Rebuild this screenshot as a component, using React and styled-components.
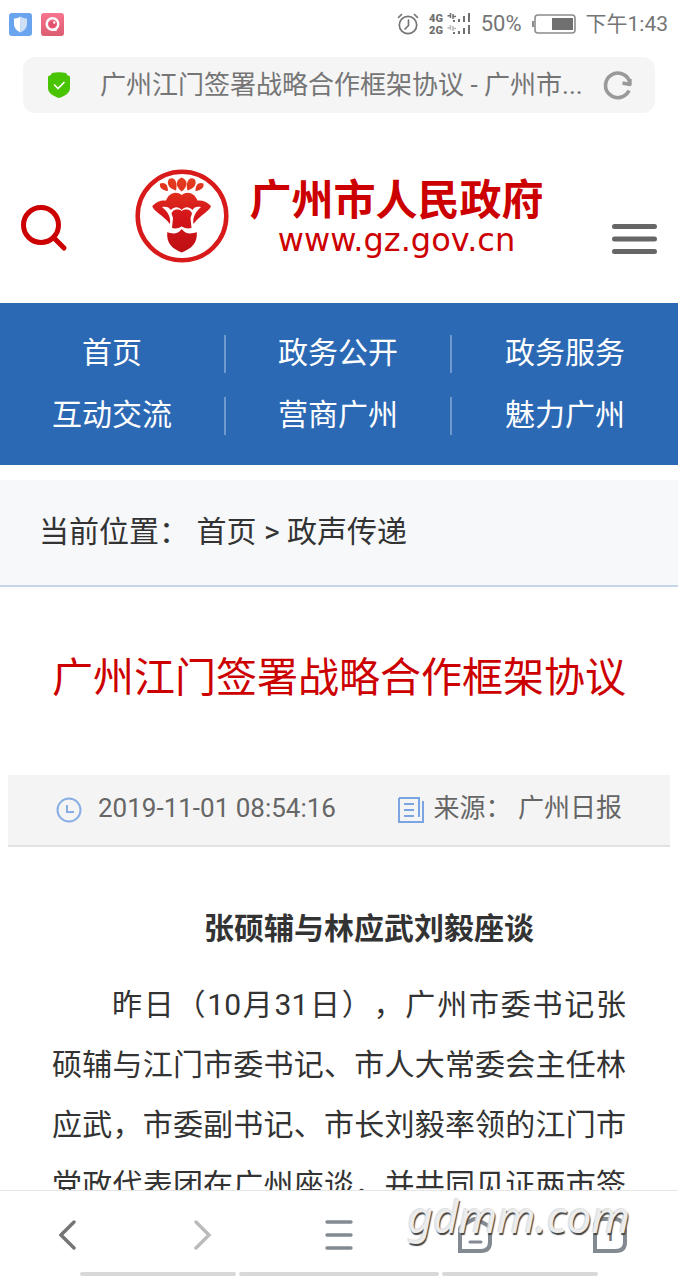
import React from 'react';
import styled, { createGlobalStyle } from 'styled-components';

const GlobalStyle = createGlobalStyle`
* {
    box-sizing: border-box;
}
body {
    margin: 0;
    background: #fff;
    color: #333;
    font-family: Roboto, "Noto Sans CJK SC", sans-serif;
    text-spacing-trim: space-all;
}
h1, h2, p {
    margin: 0;
    font-weight: 400;
}
a {
    color: inherit;
    text-decoration: none;
}
button {
    display: flex;
    padding: 0;
    border: 0;
    background: none;
    cursor: pointer;
}
svg {
    display: block;
    flex: none;
}
`;

const Screen = styled.div`
height: 100vh;
display: flex;
flex-direction: column;
overflow: hidden;
`;

const StatusBar = styled.div`
display: flex;
align-items: center;
justify-content: space-between;
flex: none;
height: 48px;
padding: 0 10px 0 9px;
color: #757575;
font-size: 22px;
line-height: 32px;
`;

const StatusGroup = styled.div`
display: flex;
align-items: center;
gap: ${({ $gap }) => $gap}px;
`;

const Time = styled.span`
font-size: 21px;
`;

const AddressBar = styled.div`
display: flex;
align-items: center;
flex: none;
height: 56px;
margin: 9px 23px 0;
padding: 0 22px 0 25px;
border-radius: 12px;
background: #f5f5f5;
`;

const AddressInput = styled.input`
flex: 1;
min-width: 0;
margin: 0 16px 0 30px;
padding: 0;
border: 0;
outline: 0;
background: transparent;
color: #757575;
font: 26px/38px Roboto, "Noto Sans CJK SC", sans-serif;
`;

const Page = styled.main`
flex: 1;
min-height: 0;
overflow: hidden;
`;

const Header = styled.header`
display: flex;
align-items: center;
justify-content: space-between;
height: 190px;
padding: 16px 20px 0;
`;

const HeaderButton = styled.button`
padding-top: ${({ $drop }) => $drop}px;
`;

const Logo = styled.a`
display: flex;
align-items: center;
gap: 20px;
color: #cc0000;
`;

const LogoText = styled.span`
display: flex;
flex-direction: column;
align-items: center;
padding-top: 6px;
`;

const LogoName = styled.span`
font-size: 42px;
line-height: 42px;
font-weight: 700;
`;

const LogoUrl = styled.span`
font-family: "DejaVu Sans", sans-serif;
font-size: 32px;
line-height: 36px;
`;

const Nav = styled.nav`
display: grid;
grid-template-columns: repeat(3, 1fr);
row-gap: 24px;
padding: 32px 0 30px;
background: #2b69b4;
`;

const NavLink = styled.a`
height: 38px;
border-right: ${({ $last }) => ($last ? '0' : '2px solid #6f99cd')};
color: #fff;
font-size: 30px;
line-height: 36px;
text-align: center;
`;

const Breadcrumb = styled.div`
margin-top: 15px;
padding: 30px 39px 31px;
border-bottom: 2px solid #c4d6e8;
background: #f7f8fa;
font-size: 30px;
line-height: 44px;
`;

const Title = styled.h1`
padding: 61px 20px 67px;
color: #cc0000;
font-size: 41px;
line-height: 60px;
text-align: center;
`;

const Meta = styled.div`
display: flex;
align-items: center;
height: 72px;
margin: 0 8px;
padding: 0 48px;
justify-content: space-between;
border-bottom: 2px solid #e2e2e2;
background: #f4f4f4;
color: #666;
font-size: 26px;
line-height: 36px;
`;

const MetaItem = styled.span`
display: flex;
align-items: center;
gap: ${({ $gap }) => $gap}px;
`;

const MetaText = styled.span`
padding-bottom: 4px;
`;

const Article = styled.article`
padding: 52px 52px 0;
font-size: 30px;
line-height: 60px;
text-indent: 2em;
`;

const Subheading = styled.h2`
margin-bottom: 16px;
font-size: 30px;
line-height: 60px;
font-weight: 700;
text-align: center;
`;

const Paragraph = styled.p`
text-align: justify;
text-align-last: justify;
`;

const Toolbar = styled.nav`
position: relative;
display: grid;
grid-template-columns: repeat(5, 1fr);
flex: none;
height: 90px;
border-top: 1px solid #e6e6e6;
background: #fff;
`;

const ToolButton = styled.button`
align-items: center;
justify-content: center;
padding-bottom: 2px;
`;

const Tracks = styled.div`
position: absolute;
left: 0;
right: 0;
bottom: 4px;
display: grid;
grid-template-columns: 157fr 200fr 157fr;
gap: 3px;
padding: 0 80px;
`;

const Track = styled.span`
height: 4px;
border-radius: 2px;
background: #d8d8d8;
`;

const Watermark = styled.span`
position: absolute;
right: 48px;
top: 0;
color: #ececec;
font: italic 44px/50px "Noto Sans", sans-serif;
text-shadow: 1px 2px 1px #444, -1px -1px 1px #ddd;
pointer-events: none;
`;

const navItems = ['首页', '政务公开', '政务服务', '互动交流', '营商广州', '魅力广州'];

const ShieldTile = () => (
    <svg width="23" height="23" viewBox="0 0 23 23">
        <rect width="23" height="23" rx="3" fill="#6ba4ee" />
        <path d="M11.500 3.500C9.500 5 7.500 5.500 5 5.500V11c0 4 3 7 6.500 8.500z" fill="#fff" />
        <path d="M11.500 3.500C13.500 5 15.500 5.500 18 5.500V11c0 4-3 7-6.500 8.500z" fill="#cfdff5" />
    </svg>
);

const CameraTile = () => (
    <svg width="23" height="23" viewBox="0 0 23 23">
        <defs>
            <linearGradient id="pink" x2="0" y2="1">
                <stop stopColor="#f9748f" />
                <stop offset="1" stopColor="#dc5c70" />
            </linearGradient>
        </defs>
        <rect width="23" height="23" rx="3" fill="url(#pink)" />
        <circle cx="11.500" cy="11" r="5.800" fill="none" stroke="#fff" strokeWidth="2.400" />
        <path d="M12 15.500h4l-.5 2.500h-4z" fill="#fff" />
        <circle cx="11.500" cy="11.500" r="3.300" fill="#e2506c" />
        <circle cx="13.200" cy="9.500" r="1.200" fill="#fff" />
    </svg>
);

const AlarmIcon = () => (
    <svg width="22" height="24" viewBox="0 0 22 24" fill="none" stroke="#757575" strokeWidth="1.700" strokeLinecap="round">
        <circle cx="11" cy="13" r="8.700" />
        <path d="M1.500 5.500 4.500 2.500M20.500 5.500 17.500 2.500M11.500 8v5.500L8 17" />
    </svg>
);

const SignalIcon = () => (
    <svg width="42" height="26" viewBox="0 0 42 26" fill="#707070">
        <text x="0" y="11" fontSize="11" fontWeight="900" fontFamily="Roboto">4G</text>
        <text x="0" y="23" fontSize="11" fontWeight="900" fontFamily="Roboto">2G</text>
        <path d="M21.500 2v5M24 3v5M18.500 5l3-.5M24 5.500h3" stroke="#707070" strokeWidth="1.500" />
        <path d="M21.500 14v5M24 15v5M18.500 17l3-.5M24 17.500h3" stroke="#bbb" strokeWidth="1.500" />
        <path d="M24 9h2v2h-2zM29 8h2v3h-2zM34 5h2v6h-2zM39 2h2v9h-2z" />
        <path d="M24 21h2v2h-2zM29 20h2v3h-2zM34 17h2v6h-2zM39 14h2v9h-2z" />
    </svg>
);

const BatteryIcon = () => (
    <svg width="44" height="20" viewBox="0 0 44 20">
        <rect x="3" y="1" width="40" height="18" rx="3" fill="none" stroke="#8c8c8c" strokeWidth="1.600" />
        <path d="M0 7h2v6H0z" fill="#8c8c8c" />
        <path d="M20 4h21v12H20z" fill="#707070" />
    </svg>
);

const SafeIcon = () => (
    <svg width="22" height="26" viewBox="0 0 22 26">
        <path d="M4 1Q11-.5 18 1 19 4 22 4.500V16c0 5-5 8-11 10C5 24 0 21 0 16V4.500Q3 4 4 1z" fill="#48c400" />
        <path d="m6 12.500 4 4 6.500-6.500" fill="none" stroke="#fff" strokeWidth="1.600" />
    </svg>
);

const ReloadIcon = () => (
    <svg width="30" height="30" viewBox="0 0 30 30" fill="none" stroke="#999" strokeWidth="3.600">
        <path d="M26 20.500A12.300 12.300 0 1 1 26.500 11.500" />
        <path d="M27 9v5.500L19.500 13" strokeWidth="3.400" strokeLinejoin="round" />
    </svg>
);

const SearchIcon = () => (
    <svg width="48" height="48" viewBox="0 0 48 48" fill="none" stroke="#cc0000" strokeWidth="5" strokeLinecap="round">
        <circle cx="21" cy="21" r="17.500" />
        <path d="m34 34 10 10" />
    </svg>
);

const MenuIcon = () => (
    <svg width="47" height="32" viewBox="0 0 47 32" stroke="#666" strokeWidth="5" strokeLinecap="round">
        <path d="M3.500 3.500h40M3.500 16h40M3.500 28.500h40" />
    </svg>
);

const Emblem = () => (
    <svg width="94" height="94" viewBox="0 0 94 94">
        <defs>
            <linearGradient id="red" gradientUnits="userSpaceOnUse" x1="0" y1="8" x2="0" y2="84">
                <stop stopColor="#e6401f" />
                <stop offset="0.5" stopColor="#d5161a" />
                <stop offset="1" stopColor="#bd1014" />
            </linearGradient>
        </defs>
        <circle cx="47" cy="47" r="44.300" fill="none" stroke="#d91a1a" strokeWidth="4.500" />
        <g fill="url(#red)">
            <path d="M46.700 8.500c-7 3-6 9.500 0 14 6-4.500 7-11 0-14z" />
            <path d="M34 10c6-3 9 4 7 11.500-7-2-10-7-7-11.500zM59.500 10c-6-3-9 4-7 11.500 7-2 10-7 7-11.500z" />
            <path d="M25 14.500c5-2 8 1 8 7.500-5-.5-9-3-8-7.500zM68.500 14.500c-5-2-8 1-8 7.500 5-.5 9-3 8-7.500z" />
            <path d="M17.300 37C22 32 26 31 31 31.500 34 24 41 21.500 46.700 26 52.500 21.500 59.500 24 62.500 31.500 67 31 71.500 32 76 37 75 42 66 45 58.500 55 57.500 49 60 43 66 38 62 37 59 38 57.500 41 54 37.500 50 37 46.700 41 43.500 37 39 37.500 36 41 34 38 31 37 27 38 33.500 43 36 49 35 55 27 45 18 42 17.300 37z" />
            <path d="M37.500 42.500C40 40 44 40 46.700 42 49.500 40 53.500 40 56 42.500L57 44.500 55.500 49 56.500 59C53 60 50 59.500 46.700 57.500 43.500 59.500 40.500 60 37 59L38 49 36.500 44.500z" />
            <path d="M32.300 63C38 65.500 43 65 46.700 60 50.500 65 55.500 65.500 61.700 63 63 74 56 80 46.700 83.500 37.500 80 31 74 32.300 63z" />
        </g>
    </svg>
);

const ClockIcon = () => (
    <svg width="26" height="26" viewBox="0 0 26 26" fill="none" stroke="#88aee6" strokeWidth="2">
        <circle cx="13" cy="13" r="11.500" />
        <path d="M11 8v7h7" />
    </svg>
);

const SourceIcon = () => (
    <svg width="26" height="26" viewBox="0 0 26 26" fill="none" stroke="#7ba4e2" strokeWidth="2">
        <path d="M1 1h20v19M25 4v21H1V1M6 7h10M6 13h10M6 19h10" />
    </svg>
);

const Chevron = ({ color, flip }) => (
    <svg width="18" height="30" viewBox="0 0 18 30" fill="none" stroke={color} strokeWidth="3.400" strokeLinecap="round">
        <path d={flip ? 'm2 2 13 13L2 28' : 'M15 2 2 15l13 13'} />
    </svg>
);

const ListIcon = () => (
    <svg width="28" height="32" viewBox="0 0 28 32" stroke="#848a91" strokeWidth="3.400" strokeLinecap="round">
        <path d="M2 3h24M2 16h24M2 29h24" />
    </svg>
);

const HomeIcon = () => (
    <svg width="34" height="36" viewBox="0 0 34 36" fill="none" stroke="#848a91" strokeWidth="4">
        <path d="M2 34V13Q2 10 5 8l9-5q3-2 6 0l9 5q3 2 3 5v12q0 9-9 9z" />
        <path d="M12 25h11" strokeWidth="3" strokeLinecap="round" />
    </svg>
);

const TabsIcon = () => (
    <svg width="34" height="36" viewBox="0 0 34 36" fill="none" stroke="#848a91" strokeWidth="4">
        <path d="M2 34V10q0-8 8-8h12q4 0 7 3 3 4 3 8v12q0 9-9 9z" />
        <text x="12" y="24" fill="#757575" stroke="none" fontSize="17" fontWeight="700" fontFamily="Roboto">1</text>
    </svg>
);

const App = () => {
    return (
        <Screen>
            <GlobalStyle />
            <StatusBar>
                <StatusGroup $gap={9}>
                    <ShieldTile />
                    <CameraTile />
                </StatusGroup>
                <StatusGroup $gap={10}>
                    <AlarmIcon />
                    <SignalIcon />
                    <span>50%</span>
                    <BatteryIcon />
                    <Time>下午1:43</Time>
                </StatusGroup>
            </StatusBar>
            <AddressBar>
                <SafeIcon />
                <AddressInput aria-label="地址" defaultValue="广州江门签署战略合作框架协议 - 广州市..." />
                <button aria-label="刷新"><ReloadIcon /></button>
            </AddressBar>
            <Page>
                <Header>
                    <HeaderButton $drop={24} aria-label="搜索"><SearchIcon /></HeaderButton>
                    <Logo href="#">
                        <Emblem />
                        <LogoText>
                            <LogoName>广州市人民政府</LogoName>
                            <LogoUrl>www.gz.gov.cn</LogoUrl>
                        </LogoText>
                    </Logo>
                    <HeaderButton $drop={46} aria-label="菜单"><MenuIcon /></HeaderButton>
                </Header>
                <Nav>
                    {navItems.map((item, i) => (
                        <NavLink key={item} href="#" $last={i % 3 === 2}>{item}</NavLink>
                    ))}
                </Nav>
                <Breadcrumb>
                    当前位置： <a href="#">首页</a> &gt; <a href="#">政声传递</a>
                </Breadcrumb>
                <Title>广州江门签署战略合作框架协议</Title>
                <Meta>
                    <MetaItem $gap={16}>
                        <ClockIcon />
                        <MetaText>2019-11-01 08:54:16</MetaText>
                    </MetaItem>
                    <MetaItem $gap={10}>
                        <SourceIcon />
                        <MetaText>来源： 广州日报</MetaText>
                    </MetaItem>
                </Meta>
                <Article>
                    <Subheading>张硕辅与林应武刘毅座谈</Subheading>
                    <Paragraph>
                        昨日（10月31日），广州市委书记张硕辅与江门市委书记、市人大常委会主任林应武，市委副书记、市长刘毅率领的江门市党政代表团在广州座谈，并共同见证两市签
                    </Paragraph>
                </Article>
            </Page>
            <Toolbar>
                <ToolButton aria-label="后退"><Chevron color="#757575" /></ToolButton>
                <ToolButton aria-label="前进"><Chevron color="#bbb" flip /></ToolButton>
                <ToolButton aria-label="菜单"><ListIcon /></ToolButton>
                <ToolButton aria-label="主页"><HomeIcon /></ToolButton>
                <ToolButton aria-label="标签页"><TabsIcon /></ToolButton>
                <Tracks>
                    <Track />
                    <Track />
                    <Track />
                </Tracks>
                <Watermark>gdmm.com</Watermark>
            </Toolbar>
        </Screen>
    );
};

export default App;
